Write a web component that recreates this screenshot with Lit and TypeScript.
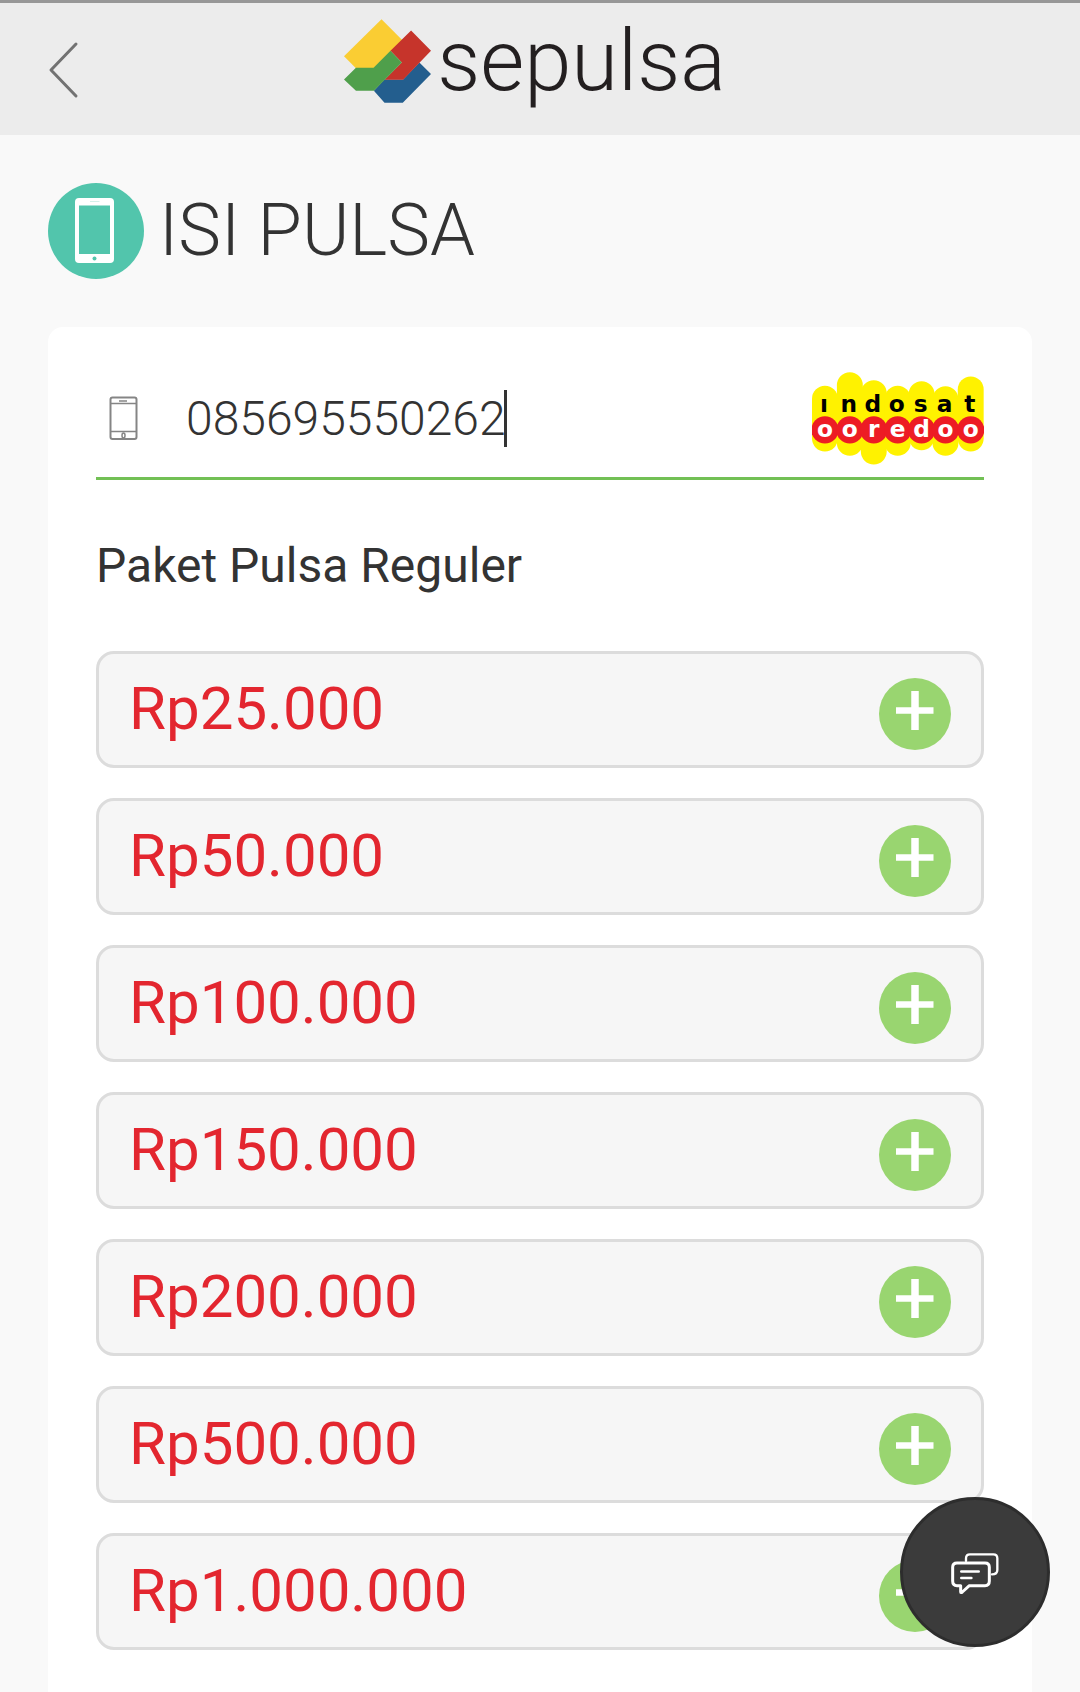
import { LitElement, html, css, svg } from "lit";
import { customElement, property, state } from "lit/decorators.js";

const PRICES = [25000, 50000, 100000, 150000, 200000, 500000, 1000000];

const formatRupiah = (value: number) =>
  "Rp" + String(value).replace(/\B(?=(\d{3})+$)/g, ".");

@customElement("site-header")
class SiteHeader extends LitElement {
  static styles = css`
    :host {
      display: block;
    }
    .bar {
      box-sizing: border-box;
      display: grid;
      grid-template-columns: 1fr auto 1fr;
      align-items: center;
      height: 135px;
      padding: 0 36px;
      border-top: 3px solid #979797;
      background: #ececec;
    }
    .back {
      width: 54px;
      height: 72px;
      margin-top: 2px;
      padding: 0;
      border: 0;
      background: none;
      cursor: pointer;
    }
    .back svg {
      display: block;
    }
    .logo {
      display: flex;
      gap: 6px;
      height: 100px;
      margin-right: 10px;
      color: #231f20;
      text-decoration: none;
    }
    .mark {
      width: 87px;
      height: 84px;
    }
    .word {
      font-size: 85px;
      font-weight: 300;
      line-height: 84px;
    }
  `;

  render() {
    return html`
      <header class="bar">
        <button class="back" type="button" aria-label="Kembali">
          <svg width="54" height="72" viewBox="0 0 54 72" fill="none" stroke="#727272" stroke-width="3" stroke-linecap="round" stroke-linejoin="round">
            <path d="M40 10 15 36l25 26" />
          </svg>
        </button>
        <a class="logo" href="#">
          <svg class="mark" viewBox="41 57 262 251" aria-hidden="true">
            <path fill="#facd33" d="M154 57 217 120 130 204H77L41 168z" />
            <path fill="#235e8e" d="M268 187 303 222 218 308H163L131 272 163 238H219z" />
            <path fill="#c6342b" d="M243 91 303 152 219 239H163L215 187 181 152z" />
            <path fill="#4f9f4b" d="M181 152 215 187 131 272H77L41 238 77 203H130z" />
          </svg>
          <span class="word">sepulsa</span>
        </a>
      </header>
    `;
  }
}

@customElement("operator-logo")
class OperatorLogo extends LitElement {
  static styles = css`
    :host {
      display: block;
    }
    .art {
      display: block;
      width: 172px;
      height: 93px;
    }
    .name {
      font-family: "DejaVu Sans", sans-serif;
      font-size: 70px;
      font-weight: 700;
      text-anchor: middle;
    }
  `;

  private columns = [
    { x: 101, top: 79, bottom: 277, upper: "ı", lower: "o" },
    { x: 176, top: 38, bottom: 290, upper: "n", lower: "o" },
    { x: 248, top: 62, bottom: 316, upper: "d", lower: "r" },
    { x: 320, top: 79, bottom: 290, upper: "o", lower: "e" },
    { x: 392, top: 65, bottom: 273, upper: "s", lower: "d" },
    { x: 464, top: 80, bottom: 290, upper: "a", lower: "o" },
    { x: 540, top: 51, bottom: 277, upper: "t", lower: "o" },
  ];

  render() {
    return html`
      <svg class="art" viewBox="62 38 518 279" role="img" aria-label="Indosat Ooredoo">
        ${this.columns.map(
          (c) => svg`<rect x=${c.x - 39} y=${c.top} width="78" height=${c.bottom - c.top} rx="39" fill="#fff200" />`
        )}
        ${this.columns.map((c) => svg`<circle cx=${c.x} cy="212" r="41" fill="#ed1c24" />`)}
        ${this.columns.map(
          (c) => svg`
            <text class="name" x=${c.x - 3} y="157" fill="#000">${c.upper}</text>
            <text class="name" x=${c.x} y="232" fill="#fff">${c.lower}</text>`
        )}
      </svg>
    `;
  }
}

@customElement("price-option")
class PriceOption extends LitElement {
  @property({ type: Number }) amount = 0;

  static styles = css`
    :host {
      display: block;
    }
    .option {
      box-sizing: border-box;
      display: flex;
      align-items: flex-start;
      justify-content: space-between;
      width: 100%;
      padding: 24px 30px 15px;
      border: 3px solid #dcdcdc;
      border-radius: 18px;
      background: #f6f6f6;
      color: #e3262f;
      font-family: inherit;
      font-size: 60px;
      line-height: 62px;
      text-align: left;
      cursor: pointer;
    }
    .plus {
      width: 72px;
      height: 72px;
    }
  `;

  render() {
    return html`
      <button class="option" type="button">
        <span>${formatRupiah(this.amount)}</span>
        <svg class="plus" viewBox="0 0 72 72" aria-hidden="true">
          <circle cx="36" cy="36" r="36" fill="#99d570" />
          <path d="M17 32.500H54.500" stroke="#fff" stroke-width="6.500" />
          <path d="M36 13V52" stroke="#fff" stroke-width="7.500" />
        </svg>
      </button>
    `;
  }
}

@customElement("app-root")
class AppRoot extends LitElement {
  @state() private phone = "085695550262";

  static styles = css`
    :host {
      display: flex;
      flex-direction: column;
      min-height: 100vh;
      background: #f9f9f9;
      color: #333;
      font-family: Roboto, sans-serif;
    }
    .content {
      flex: 1;
      display: flex;
      flex-direction: column;
      padding: 48px 48px 0;
    }
    .title {
      display: flex;
      align-items: center;
      gap: 15px;
      margin: 0 0 48px;
      font-size: 72px;
      font-weight: 300;
      line-height: 96px;
    }
    .badge {
      width: 96px;
      height: 96px;
    }
    .card {
      flex: 1;
      padding: 45px 48px 42px;
      border-radius: 15px 15px 0 0;
      background: #fff;
    }
    .field {
      display: flex;
      align-items: center;
      padding-bottom: 12px;
      border-bottom: 3px solid #72c055;
    }
    .icon {
      width: 30px;
      height: 45px;
      margin: 0 48px 0 12px;
    }
    .number {
      field-sizing: content;
      min-width: 0;
      padding: 0;
      border: 0;
      outline: 0;
      background: none;
      color: inherit;
      caret-color: transparent;
      font-family: inherit;
      font-size: 48px;
      font-weight: 300;
      line-height: 57px;
    }
    .caret {
      width: 3px;
      height: 57px;
      margin-left: -2px;
      background: #333;
    }
    .operator {
      margin-left: auto;
    }
    .subtitle {
      margin: 51px 0 50px;
      font-size: 48px;
      font-weight: 400;
      line-height: 70px;
    }
    .options {
      display: flex;
      flex-direction: column;
      gap: 30px;
      margin: 0;
      padding: 0;
      list-style: none;
    }
    .chat {
      position: fixed;
      right: 30px;
      bottom: 45px;
      display: flex;
      align-items: center;
      justify-content: center;
      width: 150px;
      height: 150px;
      padding: 0;
      border: 3px solid #2d2d2d;
      border-radius: 50%;
      background: #3b3b3b;
      cursor: pointer;
    }
    .bubbles {
      width: 50px;
      height: 46px;
    }
  `;

  private onInput(event: Event) {
    this.phone = (event.target as HTMLInputElement).value;
  }

  render() {
    return html`
      <site-header></site-header>
      <main class="content">
        <h1 class="title">
          <svg class="badge" viewBox="0 0 96 96" aria-hidden="true">
            <circle cx="48" cy="48" r="48" fill="#52c5ac" />
            <rect x="27" y="15" width="39" height="65" rx="4" fill="#fff" />
            <rect x="31" y="22.500" width="31" height="48.500" fill="#52c5ac" />
            <path d="M42 18.500H51.500" stroke="#d5f0ea" />
            <circle cx="46.500" cy="75.500" r="2" fill="#52c5ac" />
          </svg>
          ISI PULSA
        </h1>
        <section class="card">
          <div class="field">
            <svg class="icon" viewBox="0 0 30 45" fill="none" stroke="#858585" stroke-width="2" aria-hidden="true">
              <rect x="2.500" y="1.500" width="26" height="41.500" rx="2" />
              <path d="M2 7.500H28M2 35.500H28" stroke-width="1.500" />
              <path d="M11 5H19" stroke-width="1.500" />
              <ellipse cx="15.500" cy="39.500" rx="1.500" ry="2.500" stroke-width="1.500" />
            </svg>
            <input class="number" type="text" inputmode="tel" aria-label="Nomor handphone" .value=${this.phone} @input=${this.onInput} />
            <span class="caret"></span>
            <operator-logo class="operator"></operator-logo>
          </div>
          <h2 class="subtitle">Paket Pulsa Reguler</h2>
          <ul class="options">
            ${PRICES.map((amount) => html`<li><price-option .amount=${amount}></price-option></li>`)}
          </ul>
        </section>
      </main>
      <button class="chat" type="button" aria-label="Chat">
        <svg class="bubbles" viewBox="270 207 150 138" fill="none" stroke="#fff" stroke-linecap="round" stroke-linejoin="round" aria-hidden="true">
          <path stroke-width="7" d="M318 243V235Q318 223 330 223H400Q412 223 412 235V270Q412 283 396 283" />
          <path stroke-width="9" d="M291 249H375Q388 249 388 262V303Q388 317 375 317H328L307 336Q302 340 302 335V317H291Q278 317 278 303V262Q278 249 291 249Z" />
          <path stroke-width="8" d="M304 274.500H356M304 294H334" />
        </svg>
      </button>
    `;
  }
}
